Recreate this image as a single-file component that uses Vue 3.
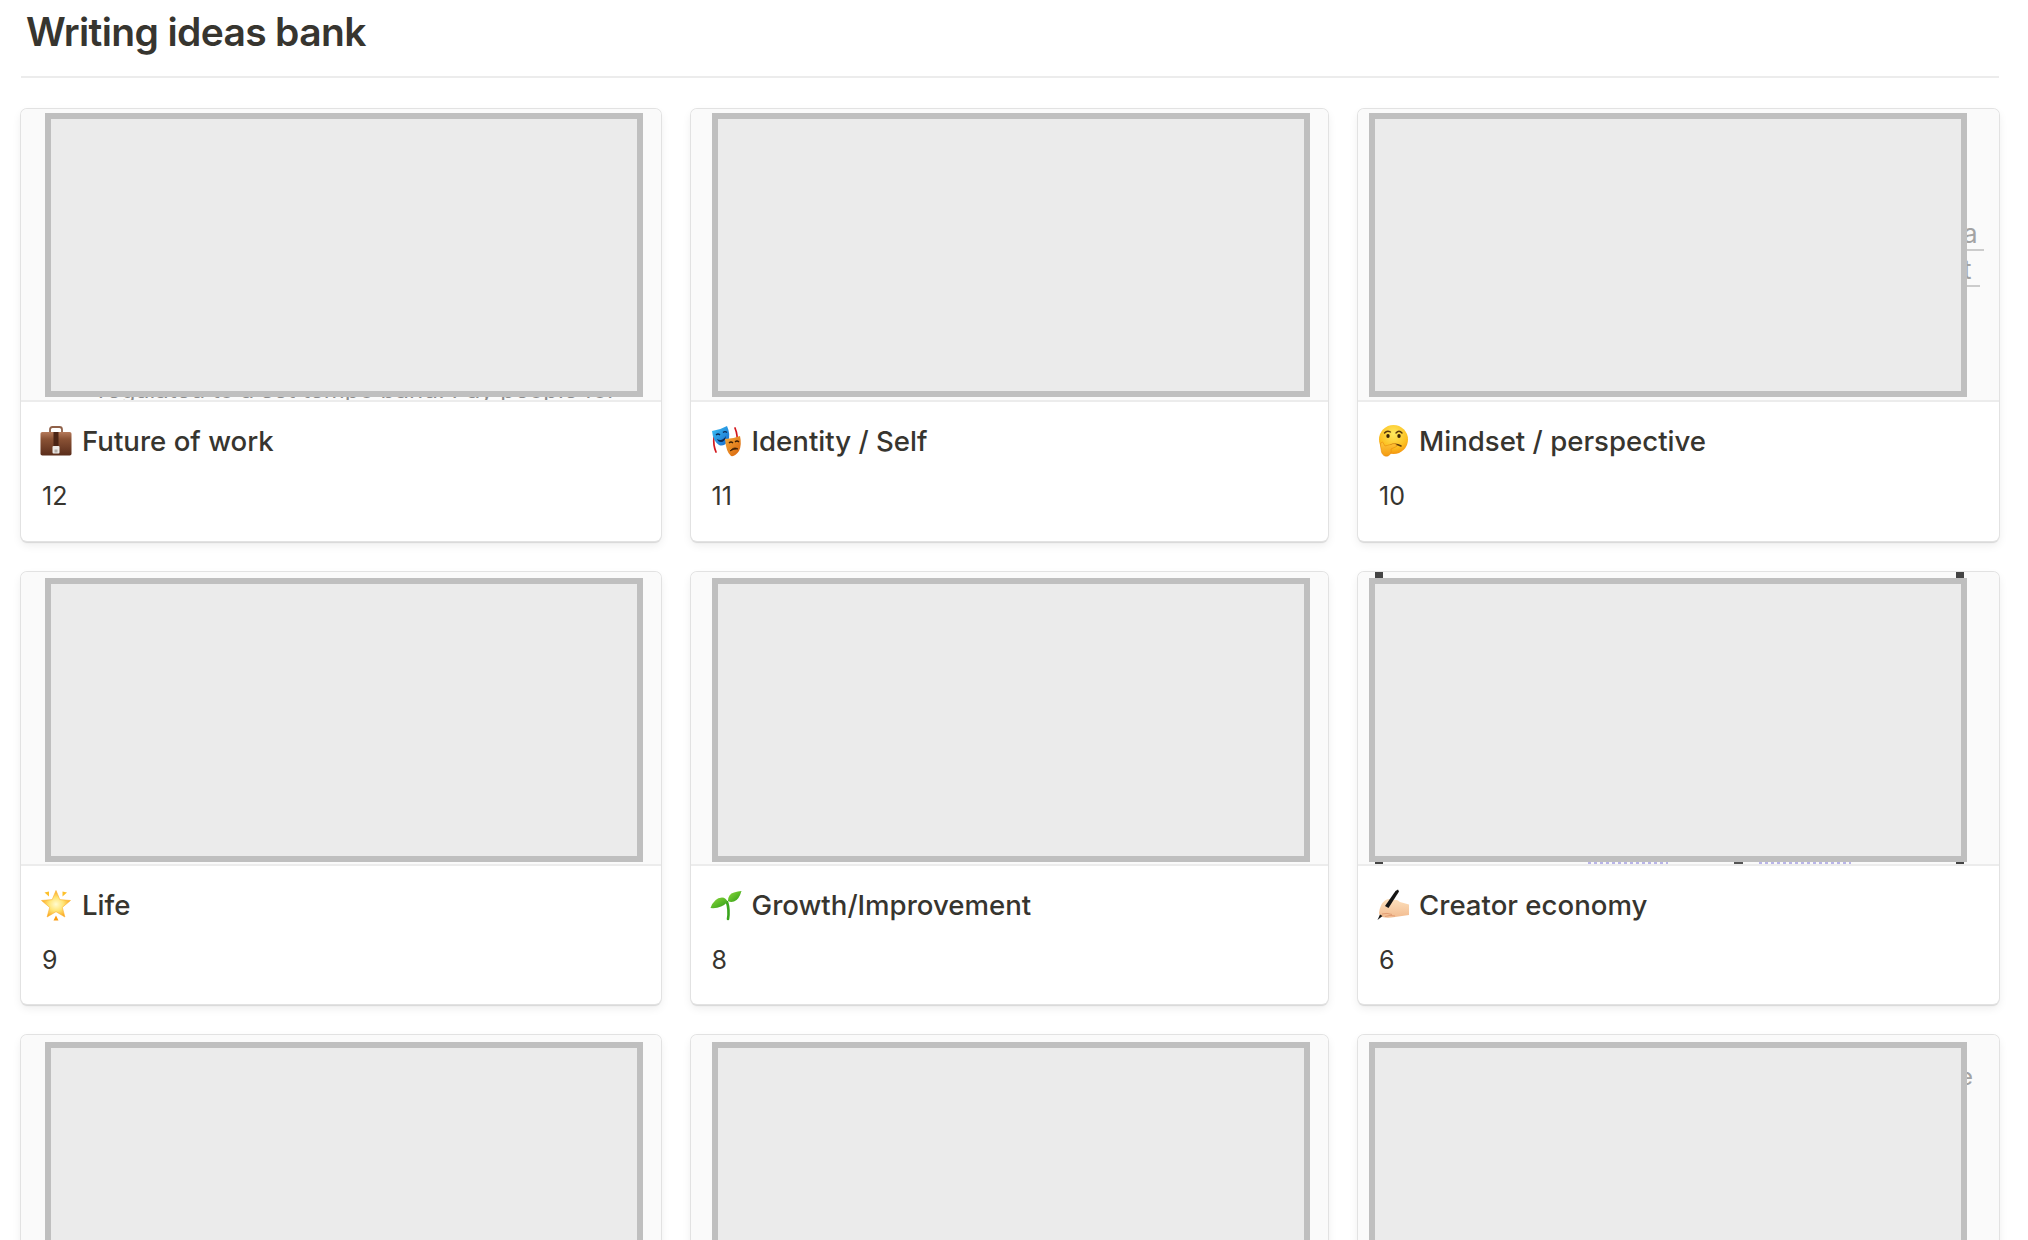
<script setup>
const cards = [
  { id: 1, name: 'Future of work', count: '12', emoji: 'briefcase', inset: 24, top: 4, ghost: 'band' },
  { id: 2, name: 'Identity / Self', count: '11', emoji: 'masks', inset: 21, top: 4 },
  { id: 3, name: 'Mindset / perspective', count: '10', emoji: 'thinking', inset: 11, top: 4, ghost: 'edge' },
  { id: 4, name: 'Life', count: '9', emoji: 'star', inset: 24, top: 6, tall: true },
  { id: 5, name: 'Growth/Improvement', count: '8', emoji: 'seedling', inset: 21, top: 6, tall: true },
  { id: 6, name: 'Creator economy', count: '6', emoji: 'hand', inset: 11, top: 6, tall: true, ghost: 'handles' },
  { id: 7, inset: 24, top: 7 },
  { id: 8, inset: 21, top: 7 },
  { id: 9, inset: 11, top: 7, ghost: 'letter' }
]
</script>

<template>
  <div class="page">
    <h1 class="title">Writing ideas bank</h1>
    <div class="grid">
      <article v-for="card in cards" :key="card.id" class="card">
        <div class="preview" :class="{ tall: card.tall }">
          <div class="frame" :style="{ marginLeft: card.inset + 'px', marginTop: card.top + 'px' }"></div>

          <p v-if="card.ghost === 'band'" class="ghost-band">regulated to a set tempo band. Pay people for</p>

          <template v-if="card.ghost === 'edge'">
            <span class="ghost-letter edge-a">a</span>
            <span class="ghost-rule rule-a"></span>
            <span class="ghost-letter edge-t">t</span>
            <span class="ghost-rule rule-t"></span>
          </template>

          <span v-if="card.ghost === 'letter'" class="ghost-letter edge-e">e</span>

          <template v-if="card.ghost === 'handles'">
            <span class="handle tl"></span>
            <span class="handle tr"></span>
            <span class="handle bl"></span>
            <span class="handle br"></span>
            <span class="lilac lilac-a"></span>
            <span class="chevron"></span>
            <span class="lilac lilac-b"></span>
          </template>
        </div>

        <div v-if="card.name" class="body">
          <div class="name">
            <svg v-if="card.emoji === 'briefcase'" class="emoji" viewBox="0 0 32 32">
              <defs>
                <linearGradient id="bc" x1="0" y1="0" x2="0" y2="1">
                  <stop offset="0" stop-color="#b5795a" />
                  <stop offset=".3" stop-color="#8a5235" />
                  <stop offset="1" stop-color="#5a2d1b" />
                </linearGradient>
              </defs>
              <path d="M10 8V4.5Q10 2 12.5 2h7Q22 2 22 4.5V8" fill="none" stroke="#8f6149" stroke-width="1.8" />
              <rect x="0.5" y="7" width="31" height="23.5" rx="1.8" fill="url(#bc)" />
              <rect x="13.5" y="7" width="5" height="15" fill="#4b2415" />
              <rect x="12.5" y="21" width="7" height="7.5" rx="1" fill="#ece9e6" />
              <rect x="14.5" y="24.5" width="3" height="3" fill="#b4aea8" />
            </svg>

            <svg v-else-if="card.emoji === 'masks'" class="emoji" viewBox="0 0 32 32">
              <defs>
                <linearGradient id="mb" x1="0" y1="0" x2="1" y2="1">
                  <stop offset="0" stop-color="#3cc4f5" />
                  <stop offset="1" stop-color="#1668cc" />
                </linearGradient>
                <linearGradient id="mo" x1="0" y1="0" x2="1" y2="1">
                  <stop offset="0" stop-color="#f5ac3c" />
                  <stop offset="1" stop-color="#d8620a" />
                </linearGradient>
              </defs>
              <path d="M4 12Q3 20 6 27" fill="none" stroke="#d3171c" stroke-width="1.7" stroke-linecap="round" />
              <path d="M25 3Q28 10 27 20" fill="none" stroke="#d3171c" stroke-width="1.7" stroke-linecap="round" />
              <path d="M2 6Q10 5 17 1Q21 10 18 16Q14 22 9 20Q3 16 2 6Z" fill="url(#mb)" />
              <path d="M6 10Q8 8 10 10M13 7.5Q15 5.5 17 7.5" fill="none" stroke="#0b2a55" stroke-width="1.2" />
              <path d="M7 14Q12 17 16 11Q15 17 11 17Q8 17 7 14Z" fill="#0b2a55" />
              <path d="M15 14Q23 14 30 11Q32 20 29 26Q25 32 21 31Q16 27 15 14Z" fill="url(#mo)" />
              <path d="M19 18Q21 16 23 18M25 17Q27 15 29 17" fill="none" stroke="#3b1d05" stroke-width="1.2" />
              <path d="M20 26Q24 21 28 24Q24 23.5 20 26Z" fill="#3b1d05" stroke="#3b1d05" stroke-width=".7" />
            </svg>

            <svg v-else-if="card.emoji === 'thinking'" class="emoji" viewBox="0 0 32 32">
              <defs>
                <radialGradient id="th" cx=".5" cy=".3" r=".75">
                  <stop offset="0" stop-color="#ffe95e" />
                  <stop offset=".65" stop-color="#fcc021" />
                  <stop offset="1" stop-color="#f28c0c" />
                </radialGradient>
                <linearGradient id="thh" x1="0" y1="0" x2="0" y2="1">
                  <stop offset="0" stop-color="#ffc83a" />
                  <stop offset="1" stop-color="#f39a12" />
                </linearGradient>
              </defs>
              <circle cx="16.5" cy="14.5" r="14.5" fill="url(#th)" />
              <path d="M7.5 8Q10 5 13.5 7M19 8Q22 4.5 25 8" fill="none" stroke="#5b3a0c" stroke-width="1.4" stroke-linecap="round" />
              <ellipse cx="11" cy="11" rx="1.7" ry="2.1" fill="#3a2407" />
              <ellipse cx="22" cy="11" rx="1.7" ry="2.1" fill="#3a2407" />
              <path d="M14 20Q19 18 24 21" fill="none" stroke="#5b3a0c" stroke-width="1.5" stroke-linecap="round" />
              <path d="M3.5 21Q3 17 5.5 17L8 21L17 18.5Q20 18.5 19.5 21.5L14 24Q15 29 11 31Q6 32 4.5 27Z" fill="url(#thh)" stroke="#e68a0c" stroke-width=".6" />
            </svg>

            <svg v-else-if="card.emoji === 'star'" class="emoji" viewBox="0 0 32 32">
              <defs>
                <radialGradient id="st" cx=".5" cy=".52" r=".55">
                  <stop offset="0" stop-color="#fffbd0" />
                  <stop offset=".45" stop-color="#ffe678" />
                  <stop offset="1" stop-color="#fa9f12" />
                </radialGradient>
              </defs>
              <path d="M16 1.5L19.8 10.6L30.5 11.5L22.3 18.4L24.9 28L16 22.7L7.1 28L9.7 18.4L1.5 11.5L12.2 10.6Z" fill="url(#st)" stroke="#fbb030" stroke-width=".6" stroke-linejoin="round" />
              <path d="M4.5 3.5L9 2.5L9 7.5Z" fill="#fdc02a" />
              <path d="M27 3.5L22.5 2.5L22.5 7.5Z" fill="#fdc02a" />
              <path d="M16 26.5L18.5 31.5H13.5Z" fill="#fb9c10" />
            </svg>

            <svg v-else-if="card.emoji === 'seedling'" class="emoji" viewBox="0 0 32 32">
              <defs>
                <linearGradient id="se" x1="0" y1="0" x2="1" y2="1">
                  <stop offset="0" stop-color="#8fdc3e" />
                  <stop offset="1" stop-color="#2c9a14" />
                </linearGradient>
              </defs>
              <path d="M17 13Q19.5 21 18 30" fill="none" stroke="#3aa51d" stroke-width="2.6" stroke-linecap="round" />
              <path d="M0.5 19Q4 9 12 8.5Q16 8.5 17.5 13Q11 20 0.5 19Z" fill="url(#se)" />
              <path d="M18 12Q18 5 24 3.5Q28 2 31.5 2Q29 11 24 12.5Q20.5 13.5 18 12Z" fill="url(#se)" />
            </svg>

            <svg v-else-if="card.emoji === 'hand'" class="emoji" viewBox="0 0 32 32">
              <defs>
                <linearGradient id="ha" x1="0" y1="0" x2="0" y2="1">
                  <stop offset="0" stop-color="#fde0bd" />
                  <stop offset="1" stop-color="#f2bb8f" />
                </linearGradient>
              </defs>
              <path d="M2 24Q3 15 8 11.5Q12 9 16 11Q20 10 23 13L32 15.5V26L18 28Q8 30 3 27Z" fill="url(#ha)" />
              <path d="M5 25Q10 23.5 15 25.5M8 27.5Q13 25.5 18 27" fill="none" stroke="#e09a70" stroke-width=".9" />
              <path d="M18.5 2L21 0.5L22 2.5L11.5 19L8 17Z" fill="#141414" />
              <path d="M0.5 31L3 25.5L5.5 27Z" fill="#141414" />
            </svg>

            <span>{{ card.name }}</span>
          </div>
          <div class="count">{{ card.count }}</div>
        </div>
      </article>
    </div>
  </div>
</template>

<style>
html,
body {
  margin: 0;
  background: #fff;
  overflow: hidden;
}
</style>

<style scoped>
.page {
  height: 1240px;
  overflow: hidden;
  padding: 0 29px 0 21px;
  font-family: Inter, "Liberation Sans", sans-serif;
  color: #37352f;
}

.title {
  margin: 0 0 31px;
  height: 78px;
  padding-left: 5px;
  border-bottom: 2px solid #ececec;
  box-sizing: border-box;
  font-size: 39px;
  font-weight: 600;
  line-height: 64px;
  letter-spacing: -0.65px;
}

.grid {
  display: grid;
  grid-template-columns: 639.5px 637.5px 1fr;
  gap: 31px 30px;
}

.card {
  height: 432px;
  overflow: hidden;
  background: #fff;
  border-radius: 6px;
  box-shadow: 0 0 0 1px #e2e2e2, 0 2px 1px #d8d8d8, 0 4px 10px rgba(15, 15, 15, 0.08);
}

.preview {
  position: relative;
  height: 291px;
  overflow: hidden;
  background: #fafafa;
  border-bottom: 2px solid #ececec;
}

.preview.tall {
  height: 292px;
}

.frame {
  position: relative;
  z-index: 2;
  width: 598px;
  height: 284px;
  box-sizing: border-box;
  background: #ebebeb;
  border: 6px solid #bfbfbf;
}

.ghost-band {
  position: absolute;
  left: 77px;
  top: 265px;
  margin: 0;
  font-size: 24px;
  line-height: 32px;
  white-space: nowrap;
  color: #8d8d8d;
}

.ghost-letter {
  position: absolute;
  font-size: 26px;
  line-height: 28px;
  color: #a3a3a3;
}

.edge-a {
  left: 605px;
  top: 111px;
}

.edge-t {
  left: 605px;
  top: 147px;
}

.edge-e {
  left: 601px;
  top: 28px;
  font-size: 24px;
}

.ghost-rule {
  position: absolute;
  height: 2px;
  left: 601px;
  background: #cccccc;
}

.rule-a {
  top: 140px;
  width: 25px;
}

.rule-t {
  top: 176px;
  width: 21px;
}

.handle {
  position: absolute;
  z-index: 1;
  width: 8px;
  height: 8px;
  background: #444;
}

.tl {
  left: 17px;
  top: 0;
}

.tr {
  left: 598px;
  top: 0;
}

.bl {
  left: 17px;
  top: 285px;
}

.br {
  left: 598px;
  top: 285px;
}

.lilac {
  position: absolute;
  top: 288px;
  height: 4px;
  background: repeating-linear-gradient(90deg, #b9b5e8 0 3px, transparent 3px 6px);
}

.lilac-a {
  left: 230px;
  width: 80px;
}

.lilac-b {
  left: 401px;
  width: 92px;
}

.chevron {
  position: absolute;
  left: 376px;
  top: 288px;
  width: 9px;
  height: 4px;
  background: #555;
}

.body {
  padding: 23px 19px 0;
}

.name {
  display: flex;
  align-items: center;
  gap: 10px;
  font-size: 27.6px;
  font-weight: 500;
  line-height: 32px;
}

.emoji {
  flex: none;
  width: 32px;
  height: 32px;
}

.count {
  margin-top: 23px;
  padding-left: 2px;
  font-size: 25px;
  line-height: 32px;
}
</style>
